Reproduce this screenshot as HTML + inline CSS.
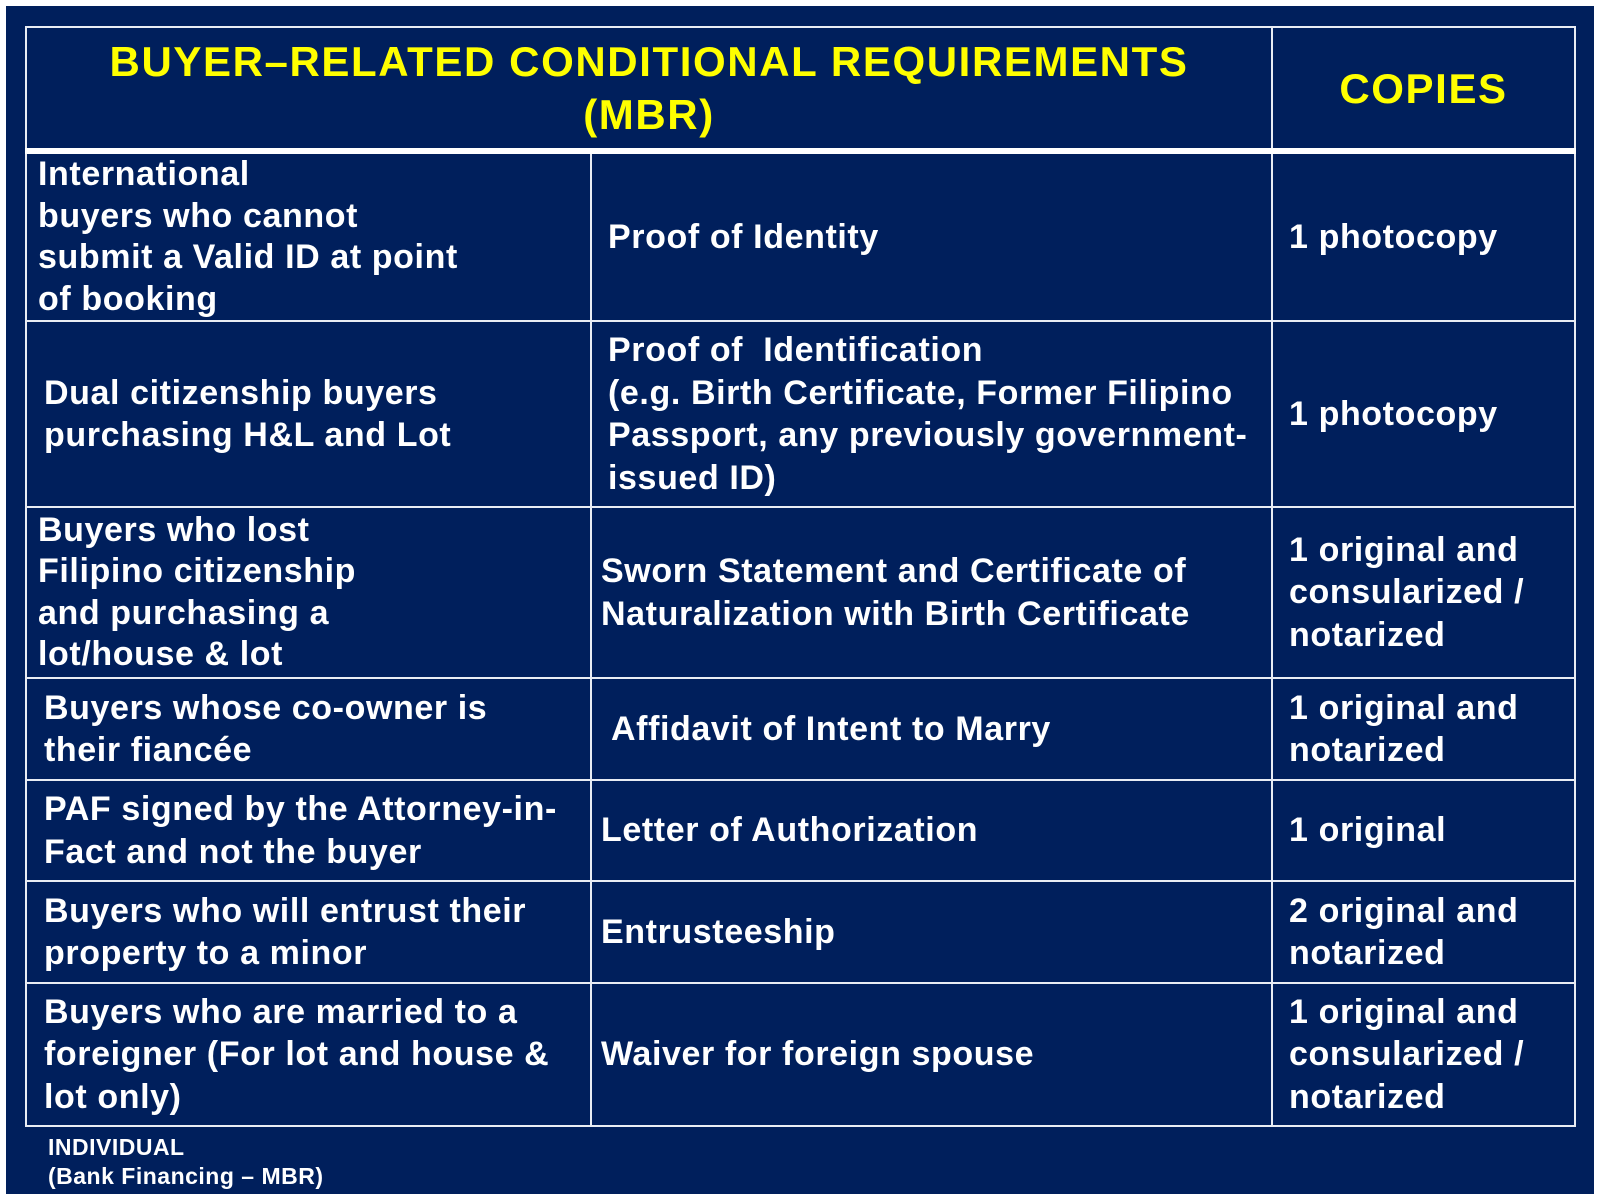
<!DOCTYPE html>
<html><head><meta charset="utf-8"><style>
html,body{margin:0;padding:0;background:#fff;}
.bg{position:absolute;left:6px;top:6px;width:1588px;height:1188px;background:#001f5c;}
table{position:absolute;left:25px;top:26px;border-collapse:collapse;table-layout:fixed;width:1549px;font-family:"Liberation Sans",Arial,sans-serif;font-weight:bold;color:#fff;font-size:34px;letter-spacing:0.6px;line-height:42.5px;}
td{border:2px solid #e8ecf4;vertical-align:middle;padding:0;white-space:nowrap;}
th{border:2px solid #e8ecf4;border-bottom:6px solid #fff;color:#ffff00;font-size:42px;letter-spacing:1.6px;line-height:53px;font-weight:bold;text-align:center;vertical-align:middle;padding:0;}
.c1{padding-left:11px}.c1b{padding-left:17px}
.c2{padding-left:16px}.c2b{padding-left:9px}
.c3{padding-left:16px}
.tight{line-height:41.5px}
.foot{position:absolute;left:48px;top:1133px;color:#fff;font-family:"Liberation Sans",Arial,sans-serif;font-weight:bold;font-size:23px;letter-spacing:0.5px;line-height:29px;}
</style></head><body>
<div class="bg"></div>
<table>
<colgroup><col style="width:565px"><col style="width:681px"><col style="width:303px"></colgroup>
<tr style="height:124px"><th colspan="2">BUYER–RELATED CONDITIONAL REQUIREMENTS<br>(MBR)</th><th>COPIES</th></tr>
<tr style="height:164px"><td class="c1 tight">International<br>buyers who cannot<br>submit a Valid ID at point<br>of booking</td><td class="c2">Proof of Identity</td><td class="c3">1 photocopy</td></tr>
<tr style="height:186px"><td class="c1b">Dual citizenship buyers<br>purchasing H&amp;L and Lot</td><td class="c2">Proof of &nbsp;Identification<br>(e.g. Birth Certificate, Former Filipino<br>Passport, any previously government-<br>issued ID)</td><td class="c3">1 photocopy</td></tr>
<tr style="height:171px"><td class="c1 tight">Buyers who lost<br>Filipino citizenship<br>and purchasing a<br>lot/house &amp; lot</td><td class="c2b">Sworn Statement and Certificate of<br>Naturalization with Birth Certificate</td><td class="c3">1 original and<br>consularized /<br>notarized</td></tr>
<tr style="height:102px"><td class="c1b">Buyers whose co-owner is<br>their fiancée</td><td class="c2" style="padding-left:19px">Affidavit of Intent to Marry</td><td class="c3">1 original and<br>notarized</td></tr>
<tr style="height:101px"><td class="c1b">PAF signed by the Attorney-in-<br>Fact and not the buyer</td><td class="c2b">Letter of Authorization</td><td class="c3">1 original</td></tr>
<tr style="height:102px"><td class="c1b">Buyers who will entrust their<br>property to a minor</td><td class="c2b">Entrusteeship</td><td class="c3">2 original and<br>notarized</td></tr>
<tr style="height:143px"><td class="c1b">Buyers who are married to a<br>foreigner (For lot and house &amp;<br>lot only)</td><td class="c2b">Waiver for foreign spouse</td><td class="c3">1 original and<br>consularized /<br>notarized</td></tr>
</table>
<div class="foot">INDIVIDUAL<br>(Bank Financing – MBR)</div>
</body></html>
